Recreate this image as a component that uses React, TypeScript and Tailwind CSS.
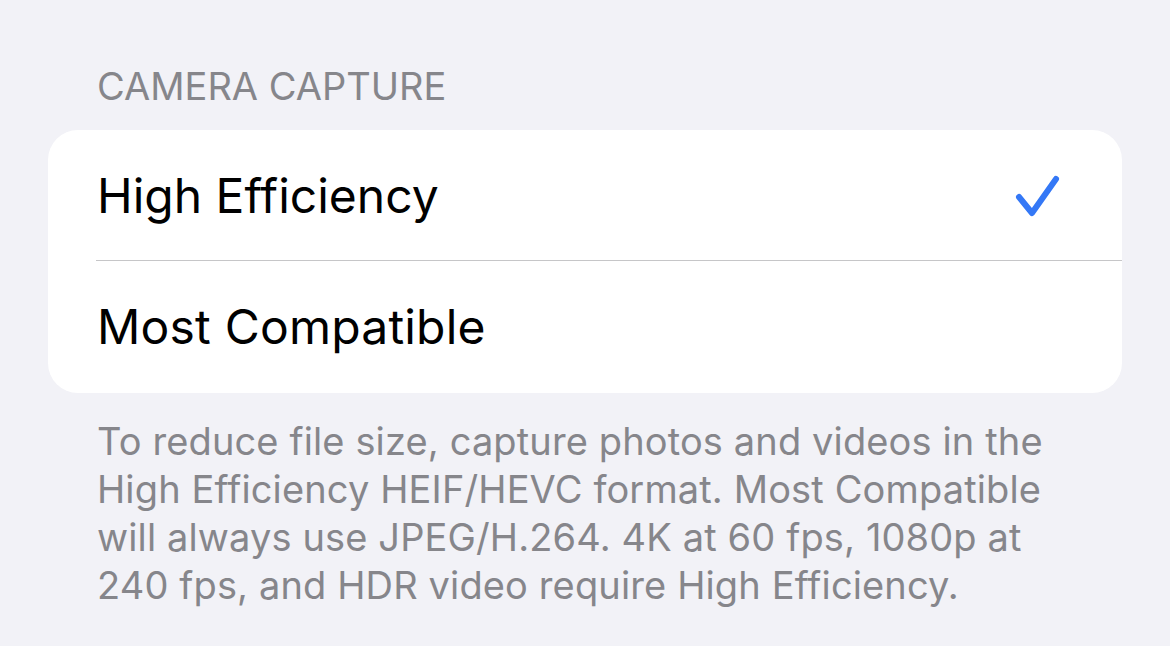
export default function App() {
  return (
    <div
      className="w-[1170px] h-[646px] bg-[#f2f2f7] overflow-hidden"
      style={{ fontFamily: "Inter, 'Noto Sans', sans-serif" }}
    >
      <div className="px-[48px] pt-[63px]">
        <div className="pl-[49px] text-[38px] leading-[46px] text-[#86868b]">
          CAMERA CAPTURE
        </div>
        <div className="mt-[21px] bg-white rounded-[30px] overflow-hidden">
          <div className="h-[131px] flex items-center pl-[49px] pr-[60px] relative">
            <span className="flex-1 text-[48px] text-black">High Efficiency</span>
            <svg width="46" height="44" viewBox="0 0 46 44" className="mr-[1px]">
              <path
                d="M4 23 L17 39 L41 5"
                fill="none"
                stroke="#3478f6"
                strokeWidth="6"
                strokeLinecap="round"
                strokeLinejoin="round"
              />
            </svg>
            <div className="absolute left-[48px] right-0 bottom-0 h-px bg-[#c6c6c8]" />
          </div>
          <div className="h-[132px] flex items-center pl-[49px]">
            <span className="text-[48px] text-black tracking-[0.2px]">Most Compatible</span>
          </div>
        </div>
        <p className="pl-[49px] pr-[30px] mt-[24px] text-[38px] leading-[48px] tracking-[0.13px] text-[#86868b]">
          To reduce file size, capture photos and videos in the High Efficiency HEIF/HEVC
          format. Most Compatible will always use JPEG/H.264. 4K at 60 fps, 1080p at 240
          fps, and HDR video require High Efficiency.
        </p>
      </div>
    </div>
  );
}
